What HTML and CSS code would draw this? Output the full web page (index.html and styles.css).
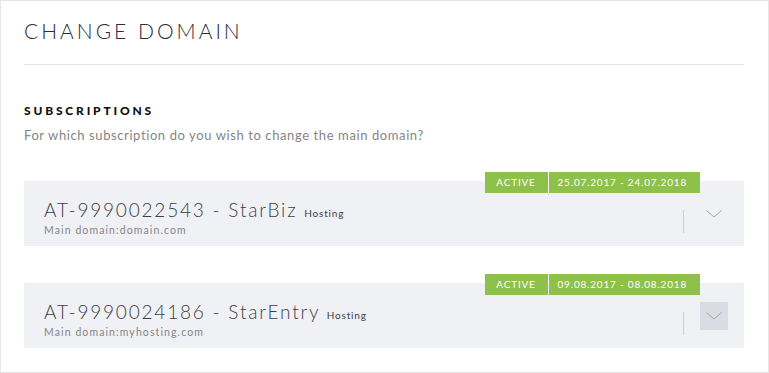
FILE: index.html
```html
<!DOCTYPE html>
<html>
<head>
<meta charset="UTF-8">
<meta name="viewport" content="width=device-width, initial-scale=1.0">
<title>Change domain</title>
<link rel="stylesheet" href="styles.css">
</head>
<body>
  <div class="panel">
    <h1 class="panel-title">CHANGE DOMAIN</h1>

    <h3 class="section-title">SUBSCRIPTIONS</h3>
    <p class="section-text">For which subscription do you wish to change the main domain?</p>

    <div class="sub-list">
      <div class="sub-card">
        <div class="badge">
          <span class="badge-state">ACTIVE</span>
          <span class="badge-dates">25.07.2017 - 24.07.2018</span>
        </div>
        <div class="sub-info">
          <div class="sub-name">AT-9990022543 - StarBiz <small>Hosting</small></div>
          <div class="sub-domain">Main domain:domain.com</div>
        </div>
        <span class="sub-sep"></span>
        <button class="toggle-btn">
          <svg width="16" height="8" viewBox="0 0 16 8"><path d="M0.5 0.5 L8 7 L15.5 0.5" fill="none" stroke="#a3a5ab" stroke-width="1"/></svg>
        </button>
      </div>

      <div class="sub-card">
        <div class="badge">
          <span class="badge-state">ACTIVE</span>
          <span class="badge-dates">09.08.2017 - 08.08.2018</span>
        </div>
        <div class="sub-info">
          <div class="sub-name">AT-9990024186 - StarEntry <small>Hosting</small></div>
          <div class="sub-domain">Main domain:myhosting.com</div>
        </div>
        <span class="sub-sep"></span>
        <button class="toggle-btn active">
          <svg width="16" height="8" viewBox="0 0 16 8"><path d="M0.5 0.5 L8 7 L15.5 0.5" fill="none" stroke="#a3a5ab" stroke-width="1"/></svg>
        </button>
      </div>
    </div>
  </div>
</body>
</html>
```

FILE: styles.css
```css
:root {
  --green: #8dc14a;
  --card-bg: #f0f1f5;
  --line: #e6e6e6;
  --text: #3d3d45;
  --muted: #858585;
}

body {
  margin: 0;
  font-family: 'Lato', 'Liberation Sans', sans-serif;
  color: var(--text);
  background: #fff;
}

.panel {
  box-sizing: border-box;
  height: 373px;
  border: 1px solid var(--line);
  padding: 18px 24px 0 23px;
}

.panel-title {
  margin: 0;
  font-size: 21px;
  line-height: 24px;
  font-weight: 300;
  letter-spacing: 3px;
  padding-bottom: 21px;
  border-bottom: 1px solid var(--line);
  color: #2c2c36;
}

.section-title {
  margin: 38px 0 0;
  font-size: 12px;
  line-height: 16px;
  font-weight: 900;
  letter-spacing: 2.8px;
  color: #111;
}

.section-text {
  margin: 7px 0 0;
  font-size: 13px;
  line-height: 18px;
  letter-spacing: 0.6px;
  color: var(--muted);
}

.sub-list {
  margin-top: 37px;
  display: flex;
  flex-direction: column;
  gap: 37px;
}

.sub-card {
  position: relative;
  height: 65px;
  box-sizing: border-box;
  background: var(--card-bg);
  padding: 18px 16px 0 20px;
  display: flex;
  align-items: flex-start;
}

.badge {
  position: absolute;
  top: -9px;
  right: 44px;
  height: 21px;
  display: flex;
  gap: 1px;
  font-size: 10px;
  line-height: 21px;
  letter-spacing: 0.8px;
  color: #fff;
}

.badge-state,
.badge-dates {
  background: var(--green);
}

.badge-state {
  width: 63px;
  box-sizing: border-box;
  text-align: center;
}

.badge-dates {
  padding: 0 13px 0 9px;
}

.sub-info {
  flex: 1;
}

.sub-name {
  font-size: 19px;
  line-height: 22px;
  font-weight: 300;
  letter-spacing: 1.8px;
  color: var(--text);
}

.sub-name small {
  font-size: 10px;
  font-weight: 400;
  letter-spacing: 0.8px;
}

.sub-domain {
  font-size: 10.5px;
  line-height: 12px;
  letter-spacing: 1.1px;
  color: var(--muted);
}

.sub-sep {
  align-self: center;
  width: 1px;
  height: 23px;
  background: #cfd0d4;
  margin: -3px 16px 0 0;
}

.toggle-btn {
  align-self: center;
  margin-top: -18px;
  width: 28px;
  height: 28px;
  padding: 0;
  border: none;
  background: transparent;
  display: flex;
  align-items: center;
  justify-content: center;
  cursor: pointer;
}

.toggle-btn.active {
  background: #dadce3;
}
```
